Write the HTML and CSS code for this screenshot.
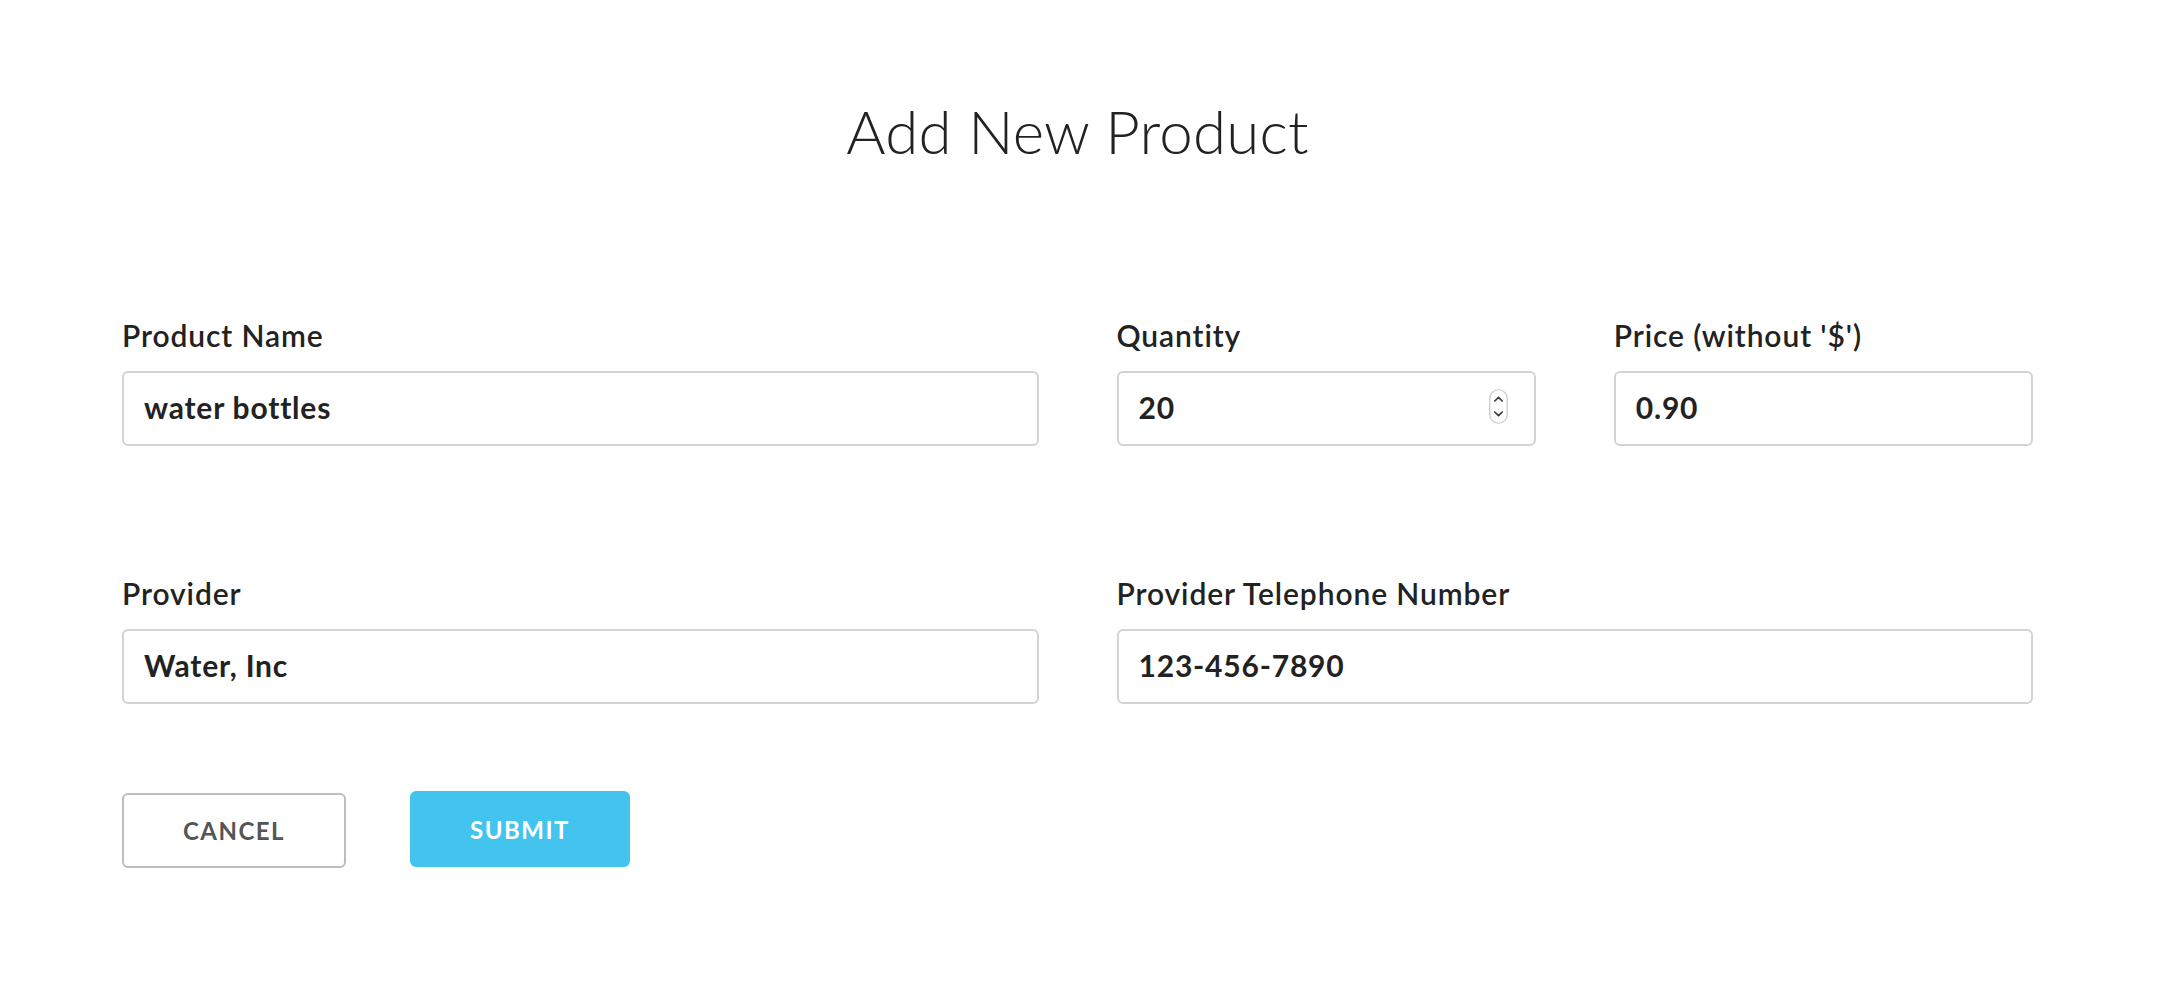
FILE: index.html
```html
<!DOCTYPE html>
<html lang="en">
<head>
<meta charset="utf-8">
<title>Add New Product</title>
<link rel="stylesheet" href="styles.css">
</head>
<body>
<main class="page">
  <h1 class="title">Add New Product</h1>
  <form class="product-form">
    <div class="grid">
      <div class="field span-2">
        <label class="label" for="name">Product Name</label>
        <input class="input" id="name" type="text" value="water bottles">
      </div>
      <div class="field">
        <label class="label" for="qty">Quantity</label>
        <div class="number-wrap">
          <input class="input" id="qty" type="text" value="20">
          <svg class="spinner" width="19" height="35" viewBox="0 0 19 35" aria-hidden="true">
            <rect x="0.75" y="0.75" width="17.5" height="33.5" rx="8.75" fill="#fff" stroke="#c9c9c9" stroke-width="1.2"/>
            <path d="M5.8 12 L9.5 8.3 L13.2 12" fill="none" stroke="#3a3a3a" stroke-width="1.7" stroke-linecap="round" stroke-linejoin="round"/>
            <path d="M5.8 23 L9.5 26.7 L13.2 23" fill="none" stroke="#3a3a3a" stroke-width="1.7" stroke-linecap="round" stroke-linejoin="round"/>
          </svg>
        </div>
      </div>
      <div class="field">
        <label class="label" for="price">Price (without '$')</label>
        <input class="input" id="price" type="text" value="0.90">
      </div>
      <div class="field span-2">
        <label class="label" for="provider">Provider</label>
        <input class="input" id="provider" type="text" value="Water, Inc">
      </div>
      <div class="field span-2">
        <label class="label" for="tel">Provider Telephone Number</label>
        <input class="input" id="tel" type="text" value="123-456-7890">
      </div>
    </div>
    <div class="actions">
      <button type="button" class="btn btn-cancel">CANCEL</button>
      <button type="button" class="btn btn-submit">SUBMIT</button>
    </div>
  </form>
</main>
</body>
</html>
```

FILE: styles.css
```css
html, body {
  margin: 0;
  padding: 0;
  background: #ffffff;
}

body {
  font-family: Lato, "Open Sans", "Liberation Sans", sans-serif;
  color: #222222;
}

.page {
  padding: 95px 0 0 122px;
  width: 1911px;
}

.title {
  margin: 0 0 150px 0;
  font-size: 60px;
  line-height: 72px;
  font-weight: 300;
  text-align: center;
  letter-spacing: 0.2px;
  color: #222222;
}

.grid {
  display: grid;
  grid-template-columns: repeat(4, 1fr);
  column-gap: 78px;
  row-gap: 129px;
}

.field {
  display: flex;
  flex-direction: column;
}

.span-2 {
  grid-column: span 2;
}

.label {
  font-size: 30px;
  line-height: 36px;
  font-weight: 600;
  letter-spacing: 0.9px;
  color: #222222;
  margin-bottom: 18px;
}

.input {
  box-sizing: border-box;
  width: 100%;
  height: 75px;
  margin: 0;
  padding: 0 20px 3px 20px;
  border: 2px solid #d3d3d3;
  border-radius: 6px;
  background: #fff;
  font-family: Lato, "Open Sans", "Liberation Sans", sans-serif;
  font-size: 30px;
  font-weight: 700;
  letter-spacing: 0.8px;
  color: #222222;
  outline: none;
}

.number-wrap {
  position: relative;
}

.spinner {
  position: absolute;
  right: 28px;
  top: 18px;
  display: block;
}

.actions {
  display: flex;
  align-items: flex-start;
  gap: 64px;
  margin-top: 87px;
}

.btn {
  box-sizing: border-box;
  font-family: Lato, "Open Sans", "Liberation Sans", sans-serif;
  font-size: 24px;
  font-weight: 700;
  letter-spacing: 1.5px;
  border-radius: 6px;
  cursor: pointer;
  padding: 0;
}

.btn-cancel {
  width: 224px;
  height: 75px;
  margin-top: 2px;
  background: #ffffff;
  border: 2px solid #bdbdbd;
  color: #555555;
}

.btn-submit {
  width: 220px;
  height: 76px;
  background: #42c4ef;
  border: none;
  color: #ffffff;
}
```
